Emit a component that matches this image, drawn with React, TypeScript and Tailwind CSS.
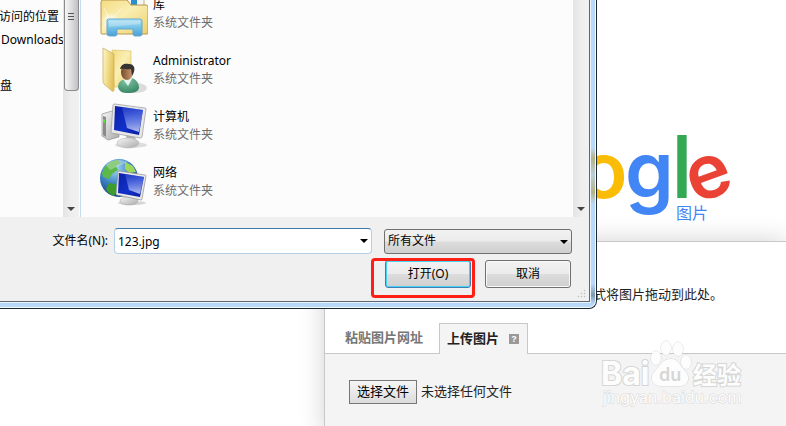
import * as React from "react";
import { clsx } from "clsx";

// ---------------------------------------------------------------------------
// Icons
// ---------------------------------------------------------------------------

function IconDefs() {
  return (
    <svg width="0" height="0" className="absolute" aria-hidden="true">
      <defs>
        <linearGradient id="folder" x1="0" y1="0" x2="1" y2="1">
          <stop offset="0" stopColor="#f3dc83" />
          <stop offset="0.45" stopColor="#faeeb2" />
          <stop offset="1" stopColor="#ecd06c" />
        </linearGradient>
        <linearGradient id="flap" x1="0" y1="0" x2="1" y2="0.3">
          <stop offset="0" stopColor="#fdf6cf" />
          <stop offset="0.5" stopColor="#f2de8c" />
          <stop offset="1" stopColor="#e3c25c" />
        </linearGradient>
        <linearGradient id="stand" x1="0" y1="0" x2="0" y2="1">
          <stop offset="0" stopColor="#b5e4f5" />
          <stop offset="0.5" stopColor="#74c2e8" />
          <stop offset="1" stopColor="#4b9fd6" />
        </linearGradient>
        <radialGradient id="glow">
          <stop offset="0" stopColor="#fff" />
          <stop offset="1" stopColor="#fff" stopOpacity="0" />
        </radialGradient>
        <linearGradient id="screen" x1="0" y1="0" x2="1" y2="1">
          <stop offset="0" stopColor="#0b1fa8" />
          <stop offset="0.55" stopColor="#1230c8" />
          <stop offset="1" stopColor="#0a1a9c" />
        </linearGradient>
        <linearGradient id="glare" x1="0.2" y1="0" x2="0.3" y2="1">
          <stop offset="0" stopColor="#3f5ce0" stopOpacity="0.4" />
          <stop offset="1" stopColor="#c5d3fb" stopOpacity="0.85" />
        </linearGradient>
        <linearGradient id="metal" x1="0" y1="0" x2="1" y2="1">
          <stop offset="0" stopColor="#f7f7f7" />
          <stop offset="1" stopColor="#a9a9a9" />
        </linearGradient>
        <radialGradient id="globe" cx="0.4" cy="0.25" r="0.8">
          <stop offset="0" stopColor="#a8d8f2" />
          <stop offset="0.5" stopColor="#3d84c4" />
          <stop offset="1" stopColor="#123a7d" />
        </radialGradient>
        <radialGradient id="shirt" cx="0.4" cy="0.2" r="0.9">
          <stop offset="0" stopColor="#7fc6a4" />
          <stop offset="1" stopColor="#31805f" />
        </radialGradient>
        <linearGradient id="face" x1="0" y1="0" x2="1" y2="0">
          <stop offset="0" stopColor="#744a2d" />
          <stop offset="1" stopColor="#cf9d72" />
        </linearGradient>
      </defs>
    </svg>
  );
}

function LibraryIcon() {
  return (
    <svg viewBox="0 0 48 48" className="size-12" aria-hidden="true">
      <path d="M27 2h17v14H27z" fill="#f6f6f6" stroke="#c0b27a" />
      <path d="M31 10h6v5h-6z" fill="#2d8fc9" />
      <path d="M1 12q0-2 2-2h24l4 5h15q2 0 2 2v26q0 1-1 1H2q-1 0-1-1z" fill="url(#folder)" stroke="#b8964a" />
      <circle cx="10" cy="31" r="9" fill="url(#glow)" />
      <path d="M10 31L4 18M10 31L22 18M10 31L2 38M10 31l12 2" stroke="#fff" strokeOpacity="0.6" />
      <path
        d="M8 29h32q2 0 2 2v13q0 2-2 2h-5q-2 0-2-2v-5H17v5q0 2-2 2h-5q-3 0-3-2V30z"
        fill="url(#stand)"
        stroke="#62a9d3"
      />
      <path d="M9 31h31v3L9 37z" fill="#fff" fillOpacity="0.25" />
    </svg>
  );
}

function UserFolderIcon() {
  return (
    <svg viewBox="0 0 48 48" className="size-12" aria-hidden="true">
      <ellipse cx="36" cy="42" rx="11" ry="5" fill="#000" fillOpacity="0.13" />
      <path d="M12 4l19 1v36H14z" fill="url(#folder)" stroke="#d9bd62" strokeWidth="0.6" />
      <path d="M3 2l11 6v36q0 2-2 1L4 38q-1-1-1-3z" fill="url(#flap)" stroke="#cbaa52" strokeWidth="0.7" />
      <path d="M18 41c0-5 4-8 10-9 6-1 11 4 11 10-1 4-5 5-11 5-5 0-9-1-10-6z" fill="url(#shirt)" />
      <path d="M23 33l5 7 5-9z" fill="#e9f3ee" />
      <ellipse cx="27" cy="26" rx="6" ry="8" fill="url(#face)" />
      <path d="M20 23c1-5 5-6 9-5 6 0 7 6 3 12l-1-7c-4 1-7-1-11 0z" fill="#363433" />
    </svg>
  );
}

function ComputerIcon() {
  return (
    <svg viewBox="0 0 48 48" className="size-12" aria-hidden="true">
      <path d="M2 12l10-3 7 4v22L8 38l-6-4z" fill="url(#metal)" stroke="#8f8f8f" strokeWidth="0.7" />
      <path d="M3 14l3 1v20l-3-2z" fill="#8a8a8a" />
      <path d="M3 17l2 1v3l-2-1z" fill="#5ee33c" />
      <ellipse cx="31" cy="43" rx="16" ry="3" fill="#000" fillOpacity="0.12" />
      <path d="M26 33l9 2 2 6-10-1z" fill="#b5b5b5" />
      <ellipse cx="28" cy="41" rx="11" ry="5" fill="url(#metal)" stroke="#b7b7b7" strokeWidth="0.6" />
      <path d="M13 3q0-1 2-1l30 4q1 0 1 1l-4 28q0 1-2 1L12 31q-1 0-1-1z" fill="#e7e7e7" stroke="#999" strokeWidth="0.7" />
      <path d="M15 4l28 4-4 25-25-5z" fill="url(#screen)" />
      <path d="M22 5l21 3-4 22-12-4z" fill="url(#glare)" />
    </svg>
  );
}

function NetworkIcon() {
  return (
    <svg viewBox="0 0 48 48" className="size-12" aria-hidden="true">
      <circle cx="19" cy="20" r="19" fill="url(#globe)" />
      <path d="M5 9q5-6 12-7l4 3-5 3 2 4-6 4-3 5-6-2-1-4z" fill="#5cb847" />
      <path d="M25 4l8 4 3 6-7 1-4-4z" fill="#9cd75c" />
      <path d="M9 25l7 1 2 5-4 7q-6-2-8-7z" fill="#3e9c2c" />
      <path d="M6 7Q15-1 28 4L10 12z" fill="#fff" fillOpacity="0.3" />
      <ellipse cx="32" cy="45" rx="14" ry="2" fill="#000" fillOpacity="0.15" />
      <ellipse cx="29" cy="43" rx="9" ry="4" fill="url(#metal)" stroke="#aaa" strokeWidth="0.6" />
      <path d="M18 14q0-1 1-1l26 4q1 0 1 1l-4 23q0 1-1 1l-24-5q-1 0-1-1z" fill="#e9e9e9" stroke="#8f8f8f" strokeWidth="0.7" />
      <path d="M19 15l25 4-4 20-22-4z" fill="url(#screen)" />
      <path d="M25 16l19 3-4 17-11-4z" fill="url(#glare)" />
    </svg>
  );
}

function Caret({ className }: { className?: string }) {
  return (
    <svg viewBox="0 0 8 4" className={clsx("pointer-events-none", className)} aria-hidden="true">
      <path d="M0 0h8L4 4z" fill="currentColor" />
    </svg>
  );
}

// ---------------------------------------------------------------------------
// File dialog
// ---------------------------------------------------------------------------

const FOLDERS = [
  { name: "库", Icon: LibraryIcon },
  { name: "Administrator", Icon: UserFolderIcon },
  { name: "计算机", Icon: ComputerIcon },
  { name: "网络", Icon: NetworkIcon },
];

function ScrollBar({ thumb = false }: { thumb?: boolean }) {
  return (
    <div className="flex w-4 shrink-0 flex-col items-center justify-between bg-gradient-to-r from-[#e4e4e4] via-[#eeeeee] to-[#f1f1f1]">
      {thumb ? (
        <div className="h-[91px] w-[15px] rounded-b-sm border border-t-0 border-[#8b8b8b] bg-gradient-to-r from-[#f6f6f6] via-[#dddde0] to-[#bfc0c4] pt-[13px]">
          <div className="mx-auto flex w-1.5 flex-col gap-[2px]">
            <i className="h-px bg-[#555]" />
            <i className="h-px bg-[#555]" />
            <i className="h-px bg-[#555]" />
          </div>
        </div>
      ) : (
        <span />
      )}
      <Caret className="mb-1.5 h-1 w-2 text-[#444]" />
    </div>
  );
}

const BUTTON =
  "h-7 w-[86px] rounded-[3px] border bg-[linear-gradient(#f2f2f2,#ebebeb_48%,#dcdcdc_52%,#cfcfcf)] text-center";

function FileDialog() {
  return (
    <section
      aria-label="打开"
      className="absolute left-0 top-0 w-[597px] rounded-br-lg border-b border-r border-[#1d2731] bg-[#f2f9ff] pb-px pr-px font-['Noto_Sans','Noto_Sans_CJK_SC',sans-serif] text-xs text-black"
    >
      <div className="rounded-br-md bg-[linear-gradient(#b9d9fb_148px,#b5b383_158px,#b9d0d8_175px,#b5b383_192px,#b9d9fb_204px,#b9d9fb_284px,#8098b0_295px,#b9d9fb_304px)] pb-1 pr-1">
        <div className="bg-[#e9f3fd] pb-px pr-px">
          <div className="border-b border-r border-[#5c6773] bg-[#f0f0f0]">
            <div className="flex h-[217px] overflow-hidden bg-[#fcfcfc]">
              <nav className="w-[63px] shrink-0 overflow-hidden whitespace-nowrap pt-[5px] leading-[23px]">
                <a href="#recent" className="-ml-px block">访问的位置</a>
                <a href="#downloads" className="ml-px block">Downloads</a>
                <a href="#disk" className="mt-[23px] block">盘</a>
              </nav>
              <ScrollBar thumb />
              <ul className="-mt-[14px] ml-px flex-1 border-l border-[#c5dcf3] pl-[19px]">
                {FOLDERS.map(({ name, Icon }) => (
                  <li key={name} className="flex h-14 items-center gap-[5px]">
                    <Icon />
                    <div className="leading-[18px]">
                      <p>{name}</p>
                      <p className="text-[#6d6d6d]">系统文件夹</p>
                    </div>
                  </li>
                ))}
              </ul>
              <ScrollBar />
            </div>

            <form className="relative flex h-[84px] flex-col items-end gap-1.5 pr-[17px] pt-[11px]" onSubmit={(e) => e.preventDefault()}>
              <div className="flex items-center">
                <label htmlFor="filename" className="mr-1.5">文件名(N):</label>
                <div className="relative mr-3">
                  <input
                    id="filename"
                    defaultValue="123.jpg"
                    className="block h-[26px] w-[258px] rounded-sm border border-[#b5cfe7] border-t-[#3d7bad] bg-white px-[3px] outline-none"
                  />
                  <Caret className="absolute right-1 top-[11px] h-1 w-2" />
                </div>
                <div className="relative">
                  <select
                    aria-label="文件类型"
                    className="block h-[25px] w-[188px] appearance-none rounded-[3px] border border-[#707070] bg-[linear-gradient(#f2f2f2,#ebebeb_48%,#dcdcdc_52%,#cfcfcf)] px-[3px] outline-none"
                  >
                    <option>所有文件</option>
                  </select>
                  <Caret className="absolute right-1 top-[11px] h-1 w-2" />
                </div>
              </div>
              <div className="flex gap-3.5 pr-px">
                <button type="submit" className={clsx(BUTTON, "border-[#3c7fb1] shadow-[inset_0_0_0_1px_#48d0f5]")}>
                  打开(O)
                </button>
                <button type="button" className={clsx(BUTTON, "border-[#707070] shadow-[inset_0_0_0_1px_#f8f8f8]")}>
                  取消
                </button>
              </div>
              <div className="pointer-events-none absolute right-[114px] top-[41px] h-10 w-[104px] rounded border-3 border-[#ff1f14]" />
              <svg viewBox="0 0 10 10" className="absolute bottom-0.5 right-0.5 size-2.5" aria-hidden="true">
                <path d="M7 1h1v1H7zM4 4h1v1H4zM7 4h1v1H7zM1 7h1v1H1zM4 7h1v1H4zM7 7h1v1H7z" fill="#aaa" stroke="#c8c8c8" strokeWidth="0.5" />
              </svg>
            </form>
          </div>
        </div>
      </div>
    </section>
  );
}

// ---------------------------------------------------------------------------
// Search page
// ---------------------------------------------------------------------------

function Logo() {
  return (
    <svg
      viewBox="0 0 180 100"
      className="h-[100px] w-[180px]"
      fontFamily="Inter, sans-serif"
      fontSize="78"
      fontWeight="600"
      role="img"
      aria-label="Google"
    >
      <text x="18" y="78" fill="#fbbc05">o</text>
      <text x="63" y="78" fill="#4285f4">g</text>
      <text x="109" y="78" fill="#34a853" fontSize="87" fontWeight="500">l</text>
      <text x="133" y="84" rotate="-20" fill="#ea4335" fontSize="75">e</text>
    </svg>
  );
}

function Watermark() {
  return (
    <svg
      viewBox="0 0 150 72"
      className="pointer-events-none absolute left-[598px] top-[338px] h-[72px] w-[150px]"
      fill="#fdfdfd"
      stroke="#d6d6d6"
      fontFamily="Inter, 'Noto Sans CJK SC', sans-serif"
      paintOrder="stroke"
      aria-hidden="true"
    >
      <text x="3" y="47" fontSize="32" fontWeight="700" strokeWidth="2">Bai</text>
      <ellipse cx="58" cy="20" rx="5" ry="7" />
      <ellipse cx="68" cy="10" rx="5" ry="7" />
      <ellipse cx="80" cy="11" rx="5" ry="7" />
      <ellipse cx="88" cy="24" rx="5" ry="7" />
      <path d="M73 21c8 0 9 7 14 12 6 6 3 15-5 15H63c-9 0-12-9-6-15 5-5 7-12 16-12z" />
      <text x="61" y="43" fontSize="18" fontWeight="600" fill="#d6d6d6" stroke="none">du</text>
      <text x="95" y="46" fontSize="24" fontWeight="700" strokeWidth="2">经验</text>
      <text x="5" y="65" fontSize="16" strokeWidth="1">jingyan.baidu.com</text>
    </svg>
  );
}

export default function App() {
  return (
    <div className="relative min-h-screen overflow-hidden bg-white font-['Liberation_Sans','Noto_Sans_CJK_SC',sans-serif] text-[13px] text-[#222]">
      <IconDefs />
      <header className="flex h-[241px] items-start pl-[562px] pt-[120px]">
        <div className="relative">
          <Logo />
          <span className="absolute left-[114px] top-[82px] text-base leading-6 text-[#4285f4]">图片</span>
        </div>
      </header>

      <main className="ml-[324px] border-l border-t border-[#c8c8c8] bg-white shadow-[0_0_24px_rgba(0,0,0,0.18)]">
        <p className="h-[81px] pl-[268px] pt-[43px] leading-5">式将图片拖动到此处。</p>
        <div className="flex items-end border-b border-[#c8c8c8] pl-5 font-bold leading-[30px]">
          <button className="text-[#777]">粘贴图片网址</button>
          <button className="-mb-px ml-4 flex items-center gap-2.5 border border-b-0 border-[#c8c8c8] bg-[#f4f4f4] pl-[7px] pr-2">
            上传图片
            <span className="size-2.5 bg-[#999] text-center text-[9px] leading-[10px] text-white">?</span>
          </button>
        </div>
        <div className="flex min-h-[80px] items-start gap-1 bg-[#f4f4f4] pb-6 pl-6 pt-[26px] leading-[22px]">
          <button className="border border-[#777] bg-gradient-to-b from-[#f6f6f6] to-[#dcdcdc] px-[7px] text-black">选择文件</button>
          <span className="leading-6">未选择任何文件</span>
        </div>
      </main>

      <FileDialog />
      <Watermark />
    </div>
  );
}
